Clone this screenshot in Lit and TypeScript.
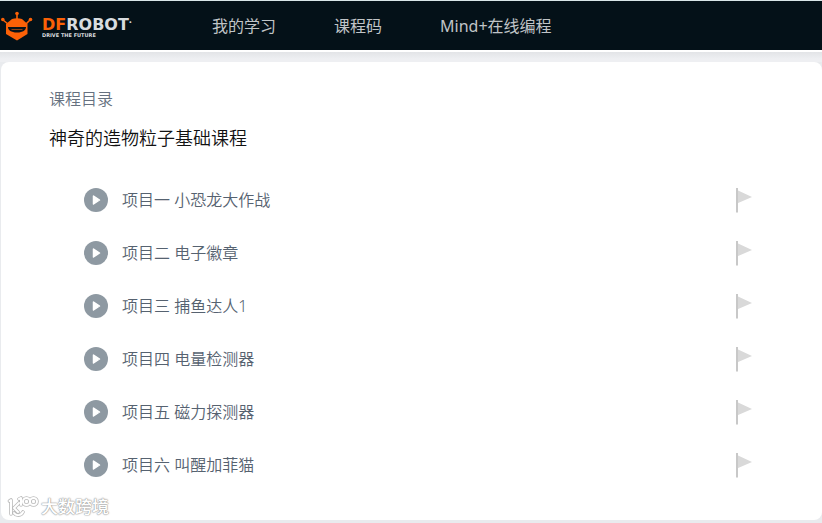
import { LitElement, html, svg, css } from "lit";
import { customElement, property } from "lit/decorators.js";

const LESSONS = [
  "项目一 小恐龙大作战",
  "项目二 电子徽章",
  "项目三 捕鱼达人1",
  "项目四 电量检测器",
  "项目五 磁力探测器",
  "项目六 叫醒加菲猫",
];

const robot = svg`
  <g fill="#fb6107" stroke="#fb6107">
    <path d="M17 4V10M3 9L8 13M30 9L26 13" stroke-width="1.6" fill="none"/>
    <circle cx="17" cy="2.500" r="1.8" stroke="none"/>
    <circle cx="2.800" cy="8.500" r="1.8" stroke="none"/>
    <circle cx="30.500" cy="8.500" r="1.8" stroke="none"/>
    <path stroke="none" d="M12 8C15 7 19 7 22 8L27.500 13V23L17 29.500L6 23V13Z"/>
  </g>
  <path fill="#07131a" d="M8 16H26C26 19 23 21.500 17 21.500S8 19 8 16Z"/>
  <path fill="#8a3f12" d="M11 18H23L22 19H12Z"/>`;

@customElement("site-header")
class SiteHeader extends LitElement {
  static styles = css`
    :host { display: block; }
    .bar {
      display: flex;
      align-items: center;
      height: 49px;
      background: #041118;
      border-top: 1px solid #d9e6e8;
      border-bottom: 2px solid #fff;
    }
    .logo { display: flex; align-items: center; gap: 8px; width: 212px; text-decoration: none; flex: none; }
    .mark { width: 34px; height: 30px; flex: none; }
    .words { display: flex; flex-direction: column; padding-top: 4px; font-family: "DejaVu Sans", sans-serif; font-weight: 700; color: #d8dcdf; }
    .name { font-size: 16px; line-height: 14px; display: flex; }
    .df { color: #fb6107; }
    .reg { font-size: 5px; line-height: 8px; }
    .tag { font-size: 5px; line-height: 6px; }
    nav { display: flex; gap: 58px; white-space: nowrap; }
    nav a { color: #c0c4c7; font-size: 16px; line-height: 24px; text-decoration: none; }
  `;
  render() {
    return html`<header class="bar">
      <a class="logo" href="#home" aria-label="DFROBOT">
        <svg class="mark" viewBox="0 0 34 30" aria-hidden="true">${robot}</svg>
        <span class="words">
          <span class="name"><span class="df">DF</span>ROBOT<span class="reg">•</span></span>
          <span class="tag">DRIVE THE FUTURE</span>
        </span>
      </a>
      <nav><a href="#study">我的学习</a><a href="#code">课程码</a><a href="#mind">Mind+在线编程</a></nav>
    </header>`;
  }
}

@customElement("lesson-row")
class LessonRow extends LitElement {
  @property() label = "";
  static styles = css`
    :host { display: block; }
    .row { display: flex; align-items: center; height: 53px; color: #566270; text-decoration: none; }
    .play { width: 24px; height: 24px; margin-right: 14px; flex: none; }
    .label { flex: 1; font-size: 16px; line-height: 24px; font-weight: 350; }
    .flag { width: 18px; height: 26px; flex: none; }
  `;
  render() {
    return html`<a class="row" href="#lesson">
      <svg class="play" viewBox="0 0 24 24" aria-hidden="true">
        <circle cx="12" cy="12" r="12" fill="#8e99a2"/>
        <path d="M9.500 8L15.500 12L9.500 16Z" fill="#fff" stroke="#fff" stroke-width="1.500" stroke-linejoin="round"/>
      </svg>
      <span class="label">${this.label}</span>
      <svg class="flag" viewBox="0 0 18 26" aria-hidden="true">
        <path d="M2 3L17 10L2 16.500Z" fill="#d9d9d9"/>
        <path d="M1 1H3V25.500H1Z" fill="#c8c8c8"/>
      </svg>
    </a>`;
  }
}

@customElement("app-root")
class AppRoot extends LitElement {
  static styles = css`
    :host {
      display: block;
      min-height: 100vh;
      position: relative;
      background: #e9ebee;
      font-family: "Noto Sans", "Noto Sans CJK SC", sans-serif;
    }
    .shade { height: 10px; background: linear-gradient(#e2e4e7, #eeeff2 70%); }
    .card { margin-left: 1px; padding: 25px 69px 29px 48px; background: #fff; border-radius: 8px; }
    .kicker { margin: 0; font-size: 16px; line-height: 24px; font-weight: 350; color: #667180; }
    h1 { margin: 12px 0 0; font-size: 18px; line-height: 30px; font-weight: 350; color: #111; }
    ul { list-style: none; margin: 20px 0 0; padding: 0 0 0 35px; }
    .watermark {
      position: absolute;
      left: 7px;
      bottom: 4px;
      display: flex;
      align-items: center;
      gap: 2px;
      color: #fff;
      font-size: 17px;
      line-height: 22px;
      font-weight: 500;
      text-shadow: 0 0 1px #999, 0 0 1px #999, 0 0 2px #aaa;
    }
    .wm-mark { width: 32px; height: 24px; }
  `;
  render() {
    return html`
      <site-header></site-header>
      <div class="shade"></div>
      <main class="card">
        <p class="kicker">课程目录</p>
        <h1>神奇的造物粒子基础课程</h1>
        <ul>${LESSONS.map((l) => html`<li><lesson-row .label=${l}></lesson-row></li>`)}</ul>
      </main>
      <div class="watermark">
        <svg class="wm-mark" viewBox="0 0 32 24" fill="none" stroke-linecap="round" stroke-linejoin="round" aria-hidden="true">
          ${["#bbb", "#fff"].map((c, i) => svg`<g stroke=${c} stroke-width=${i ? 2 : 3.6}>
            <path d="M2.500 6L4 5V19M12 8L7 13L11 17M7 18C9 21 14 21 16 17M12 4L14 3V10"/>
            <circle cx="19.500" cy="6.500" r="3.500"/><circle cx="26.500" cy="6.500" r="3.500"/>
          </g>`)}
        </svg>
        <span>大数跨境</span>
      </div>`;
  }
}
